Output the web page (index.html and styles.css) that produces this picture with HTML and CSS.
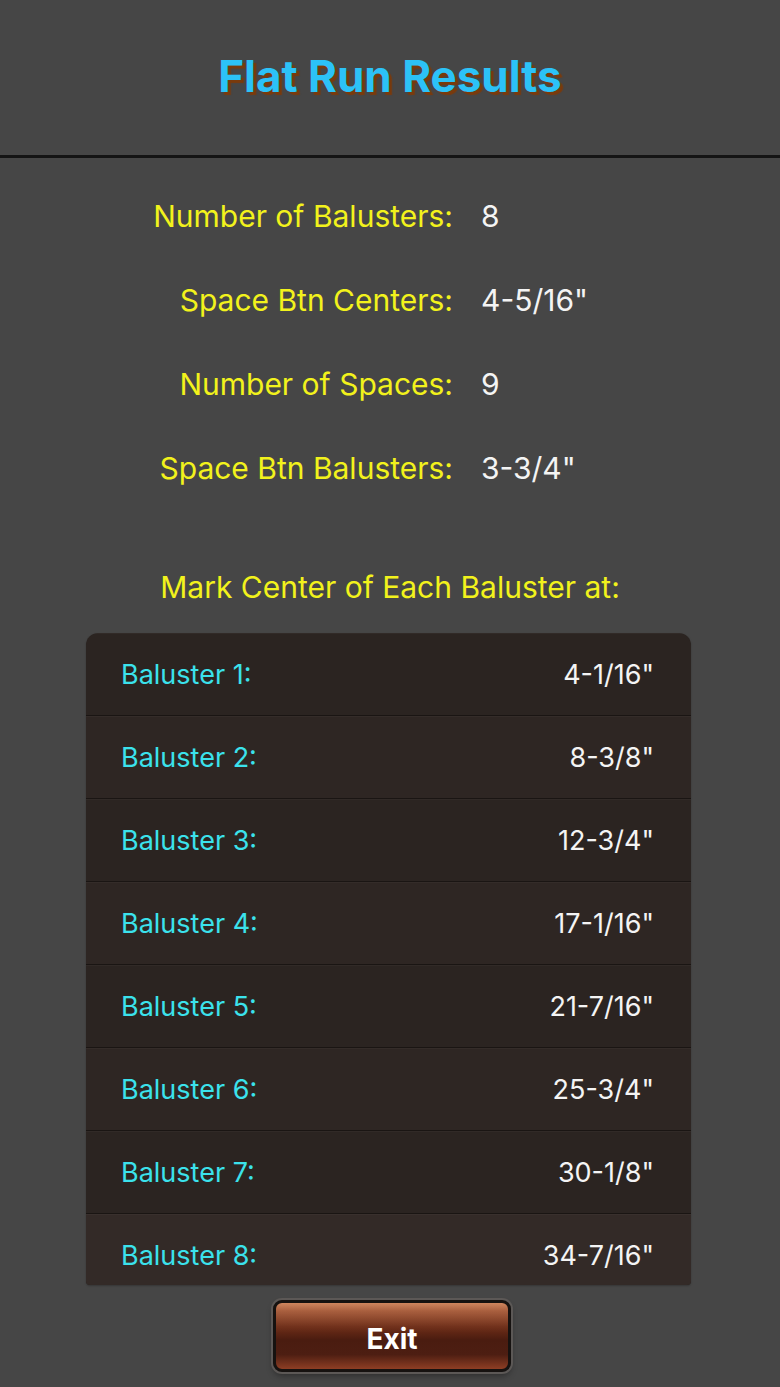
FILE: index.html
```html
<!DOCTYPE html>
<html lang="en">
<head>
<meta charset="utf-8">
<title>Flat Run Results</title>
<link rel="stylesheet" href="styles.css">
</head>
<body>
<header class="top-bar">
  <h1 class="title">Flat Run Results</h1>
</header>

<main class="content">
  <dl class="stats">
    <dt>Number of Balusters:</dt><dd>8</dd>
    <dt>Space Btn Centers:</dt><dd>4-5/16"</dd>
    <dt>Number of Spaces:</dt><dd>9</dd>
    <dt>Space Btn Balusters:</dt><dd>3-3/4"</dd>
  </dl>

  <h2 class="marks-heading">Mark Center of Each Baluster at:</h2>

  <ul class="marks">
    <li><span class="name">Baluster 1:</span><span class="pos">4-1/16"</span></li>
    <li><span class="name">Baluster 2:</span><span class="pos">8-3/8"</span></li>
    <li><span class="name">Baluster 3:</span><span class="pos">12-3/4"</span></li>
    <li><span class="name">Baluster 4:</span><span class="pos">17-1/16"</span></li>
    <li><span class="name">Baluster 5:</span><span class="pos">21-7/16"</span></li>
    <li><span class="name">Baluster 6:</span><span class="pos">25-3/4"</span></li>
    <li><span class="name">Baluster 7:</span><span class="pos">30-1/8"</span></li>
    <li><span class="name">Baluster 8:</span><span class="pos">34-7/16"</span></li>
  </ul>

  <div class="actions">
    <button class="exit-btn" type="button">Exit</button>
  </div>
</main>
</body>
</html>
```

FILE: styles.css
```css
html, body {
  margin: 0;
  padding: 0;
}

body {
  background: #464646;
  font-family: Inter, "Liberation Sans", Arial, sans-serif;
  color: #fff;
  width: 780px;
  min-height: 1387px;
}

/* Header */
.top-bar {
  height: 155px;
  border-bottom: 3px solid #141414;
  display: flex;
  align-items: center;
  justify-content: center;
}

.title {
  margin: 0 0 4px 0;
  font-size: 44px;
  font-weight: 700;
  letter-spacing: 0;
  color: #2cc2f7;
  text-shadow: 3px 3px 1px #7a3a0c;
}

/* Summary figures */
.content {
  display: flex;
  flex-direction: column;
}

.stats {
  margin: 16px 0 0 0;
  display: grid;
  grid-template-columns: 453px 1fr;
  column-gap: 28px;
  grid-auto-rows: 84px;
  align-items: center;
  font-size: 30px;
}

.stats dt {
  text-align: right;
  color: #f2f21c;
}

.stats dd {
  margin: 0;
  color: #f4f4f4;
}

.marks-heading {
  margin: 60px 0 29px 0;
  font-size: 30px;
  font-weight: 400;
  line-height: 34px;
  text-align: center;
  color: #f2f21c;
}

/* Baluster mark list */
.marks {
  list-style: none;
  margin: 0 0 0 86px;
  padding: 0;
  width: 605px;
  height: 652px;
  overflow: hidden;
  background: #2b2421;
  border-radius: 12px 12px 4px 4px;
  box-shadow: 0 1px 2px rgba(0, 0, 0, 0.25);
}

.marks li {
  height: 82px;
  border-bottom: 1px solid #1a1513;
  box-shadow: inset 0 1px 0 rgba(255, 255, 255, 0.03);
  display: flex;
  align-items: center;
  justify-content: space-between;
  padding: 0 37px 0 35px;
  font-size: 27px;
}

.marks li:nth-child(even) {
  background: #2e2623;
}

.marks li:last-child {
  background: #332a27;
}

.marks .name {
  color: #3be2ec;
}

.marks .pos {
  color: #f4f4f4;
}

/* Exit button */
.actions {
  display: flex;
  justify-content: center;
  padding: 15px 0 0 4px;
}

.exit-btn {
  width: 238px;
  height: 72px;
  padding: 6px 0 0 0;
  border-radius: 9px;
  border: 3px solid #161210;
  box-shadow: 0 0 0 2px #5c5856, 0 4px 6px rgba(0, 0, 0, 0.35);
  background:
    linear-gradient(to bottom,
      rgba(255, 255, 255, 0.10) 0%,
      rgba(255, 255, 255, 0.0) 45%,
      rgba(0, 0, 0, 0) 100%),
    linear-gradient(to bottom,
      #c9784c 0%,
      #a2522f 12%,
      #6e2d17 36%,
      #4a1c10 56%,
      #4d1e12 78%,
      #8e3e24 100%);
  color: #fff;
  font-family: Inter, "Liberation Sans", Arial, sans-serif;
  font-size: 28px;
  font-weight: 700;
  cursor: pointer;
}
```
